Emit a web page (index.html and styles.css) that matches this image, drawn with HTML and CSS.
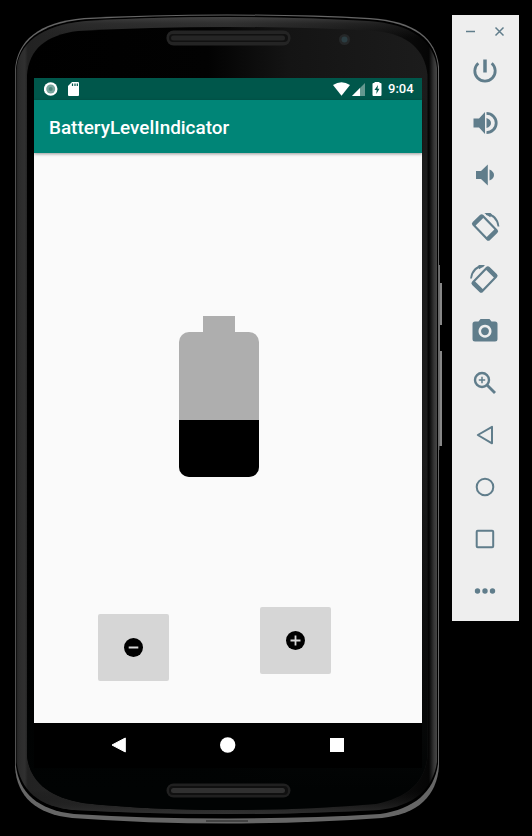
FILE: index.html
```html
<!DOCTYPE html>
<html lang="en">
<head>
<meta charset="utf-8">
<title>BatteryLevelIndicator</title>
<link rel="stylesheet" href="styles.css">
</head>
<body>
<div class="desktop">
  <div class="phone">
    <svg class="frame" width="452" height="836" viewBox="0 0 452 836" aria-hidden="true">
      <defs>
        <linearGradient id="side" x1="15" x2="440" y1="0" y2="0" gradientUnits="userSpaceOnUse">
          <stop offset="0" stop-color="#1c1c1c"/><stop offset=".009" stop-color="#2b2b2b"/>
          <stop offset=".023" stop-color="#303030"/><stop offset=".03" stop-color="#222"/>
          <stop offset=".5" stop-color="#303030"/><stop offset=".974" stop-color="#050505"/>
          <stop offset=".986" stop-color="#363636"/><stop offset="1" stop-color="#555"/>
        </linearGradient>
        <linearGradient id="topEdge" x1="0" x2="0" y1="14" y2="823" gradientUnits="userSpaceOnUse">
          <stop offset="0" stop-color="#555" stop-opacity=".9"/><stop offset=".012" stop-color="#303030" stop-opacity=".5"/>
          <stop offset=".03" stop-color="#222" stop-opacity="0"/><stop offset=".96" stop-color="#111" stop-opacity="0"/>
          <stop offset=".978" stop-color="#222" stop-opacity=".6"/><stop offset="1" stop-color="#444"/>
        </linearGradient>
        <linearGradient id="glass" x1="27" x2="428" y1="0" y2="0" gradientUnits="userSpaceOnUse">
          <stop offset="0" stop-color="#000"/><stop offset=".45" stop-color="#020202"/>
          <stop offset=".65" stop-color="#141414"/><stop offset="1" stop-color="#1c1c1c"/>
        </linearGradient>
        <linearGradient id="fade" x1="0" x2="0" y1="460" y2="790" gradientUnits="userSpaceOnUse">
          <stop offset="0" stop-color="#000" stop-opacity="0"/><stop offset="1" stop-color="#010303"/>
        </linearGradient>
      </defs>
      <path d="M438 265h2v18h2v42h-2v26h2v95h-4z" fill="#888"/>
      <path d="M439 265v185" stroke="#555"/>
      <path d="M15 70C17 41 38 22 84 18Q150 14.500 227 14.500T370 18C415 21 436 38 439 67V766C437 796 418 814 382 818Q306 823.500 227 823.500T72 818C36 814 17 797 15 767Z" fill="#666"/>
      <path d="M15.800 70C17.800 42.500 39 23.500 85 19.300Q150 15.500 227 15.500T369 19.300C414 22.500 436 39.500 438 68V764C434 792 414 809 380 814Q306 818.500 227 818.500T74 814C38 810 19 793 15.800 765Z" fill="#000"/>
      <path d="M16.500 70C18.500 44 40 25 86 21Q150 17 227 17T368 21C412 24 434 41 437 68V762C433 789 414 806 379 810Q306 814 227 814T74 810C39 807 20 790 16.500 762Z" fill="url(#side)"/>
      <path d="M16.500 70C18.500 44 40 25 86 21Q150 17 227 17T368 21C412 24 434 41 437 68V762C433 789 414 806 379 810Q306 814 227 814T74 810C39 807 20 790 16.500 762Z" fill="url(#topEdge)"/>
      <path d="M27 75C29 49 46 35 78 31Q150 27 227 27T376 31C408 34 425 50 427.500 75V756C425 782 409 797 376 804Q306 810 227 810T83 803C49 797 30 782 27 756Z" fill="url(#glass)"/>
      <path d="M27 460H427.500V756C425 782 409 797 376 804Q306 810 227 810T83 803C49 797 30 782 27 756Z" fill="url(#fade)"/>
      <rect x="166.500" y="30.500" width="124" height="15" rx="7" fill="#242424"/>
      <rect x="169" y="34" width="119" height="8" rx="4" fill="#111"/>
      <rect x="171" y="35.500" width="114" height="5" rx="2.500" fill="#252525"/>
      <rect x="166.500" y="783.500" width="124" height="14" rx="7" fill="#202020"/>
      <rect x="169" y="786" width="119" height="9" rx="4" fill="#101010"/>
      <rect x="171" y="788" width="114" height="5" rx="2.500" fill="#303030"/>
      <circle cx="344.500" cy="39.500" r="5.500" fill="#252728"/><circle cx="344.500" cy="39.500" r="3" fill="#2b3d42"/>
      <path d="M206 821H248" stroke="#222"/>
    </svg>
    <main class="screen">
      <header class="status">
        <svg class="record" width="14" height="14" viewBox="0 0 14 14"><circle cx="6.700" cy="7" r="6.800" fill="#fff"/><circle cx="6.700" cy="7" r="4.500" fill="#78a59d"/><circle cx="6.700" cy="7" r="2" fill="#4b857a"/></svg>
        <svg width="11" height="14" viewBox="0 0 11 14"><path d="M4 0h6q1 0 1 1v12q0 1-1 1H1q-1 0-1-1V4z" fill="#fff"/><path d="M4.500 1.500V4M7 1.500V4M9.300 1.500V4" stroke="#00574b" stroke-width="1.200"/></svg>
        <span class="space"></span>
        <svg class="signals" width="52" height="22" viewBox="0 0 52 22"><path d="M0 7Q8.500 1.500 17 7L8.500 17.800z" fill="#fff"/><path d="M32 5v13H19z" fill="#65988f"/><path d="M27 10v8h-8z" fill="#fff"/><g transform="translate(-1.500 0)"><path d="M43 5V4h5v1h1q1 0 1 1v11q0 1-1 1h-7q-1 0-1-1V6q0-1 1-1z" fill="#fff"/><path d="M46.500 7L43 12h2.200l-.4 4L48 10.800h-2z" fill="#00574b"/></g></svg>
        <time class="clock">9:04</time>
      </header>
      <div class="appbar"><h1>BatteryLevelIndicator</h1></div>
      <div class="content">
        <div class="battery"><div class="cap"></div><div class="cell"><div class="level"></div></div></div>
        <div class="controls">
          <button class="step minus" aria-label="Decrease"><svg width="19" height="19" viewBox="0 0 19 19"><circle cx="9.500" cy="9.500" r="9.500"/><path d="M4.700 9.500h9.600" stroke="#d6d6d6" stroke-width="2"/></svg></button>
          <button class="step" aria-label="Increase"><svg width="19" height="19" viewBox="0 0 19 19"><circle cx="9.500" cy="9.500" r="9.500"/><path d="M4.500 9.500h10M9.500 4.500v10" stroke="#d6d6d6" stroke-width="1.800"/></svg></button>
        </div>
      </div>
      <nav class="navbar">
        <svg width="16" height="16" viewBox="0 0 16 16"><path d="M14.300 1v14L1 8z" fill="#fff" stroke="#fff" stroke-linejoin="round"/></svg>
        <svg width="16" height="16" viewBox="0 0 16 16"><circle cx="7.700" cy="8" r="7.700" fill="#fff"/></svg>
        <svg width="16" height="16" viewBox="0 0 16 16"><path d="M1 1h14v14H1z" fill="#fff"/></svg>
      </nav>
    </main>
  </div>
  <aside class="toolbar">
    <div class="window">
      <svg width="12" height="12" viewBox="0 0 12 12"><path d="M1 6.500h9" class="line thin"/></svg>
      <svg width="12" height="12" viewBox="0 0 12 12"><path d="M1.500 2.500l8 8M9.500 2.500l-8 8" class="line thin"/></svg>
    </div>
    <svg class="tool" viewBox="0 0 32 32"><path d="M9.300 8.300A10.200 10.200 0 1 0 22.700 8.300" class="line thick"/><path d="M16 4.500v13" class="line power"/></svg>
    <svg class="tool" viewBox="0 0 32 32"><path d="M4.500 11.500h5.500l6-6.500v22l-6-6.500H4.500zM17.500 11q4.500 1.500 4.500 5t-4.500 5z" class="fill"/><path d="M17.500 6.300a9.700 9.700 0 0 1 0 19.400" class="line thick"/></svg>
    <svg class="tool" viewBox="0 0 32 32"><path d="M7 12h5l6.800-6.500v21L12 20H7zM20.500 10.500q4.500 2 4.500 5.500t-4.500 5.500z" class="fill"/></svg>
    <svg class="tool" viewBox="0 0 32 32"><g transform="rotate(46 16 16.500)"><path fill-rule="evenodd" d="M6 9h20q2.500 0 2.500 2.500v10q0 2.500-2.500 2.500H6q-2.500 0-2.500-2.500v-10Q3.500 9 6 9zM8 11.200v10.600h16V11.200z" class="fill"/></g><path d="M17 3Q28 4 29.500 15.500" class="line arc"/><path d="M15.300 2l6.200.1 1.500 1.400-1.800 2.800z" class="fill"/></svg>
    <svg class="tool" viewBox="0 0 32 32"><g transform="matrix(-1 0 0 1 31.500 0)"><g transform="rotate(46 16 16.500)"><path fill-rule="evenodd" d="M6 9h20q2.500 0 2.500 2.500v10q0 2.500-2.500 2.500H6q-2.500 0-2.500-2.500v-10Q3.500 9 6 9zM8 11.200v10.600h16V11.200z" class="fill"/></g><path d="M17 3Q28 4 29.500 15.500" class="line arc"/><path d="M15.300 2l6.200.1 1.500 1.400-1.800 2.800z" class="fill"/></g></svg>
    <svg class="tool" viewBox="0 0 32 32"><path fill-rule="evenodd" d="M11.500 4h9l2 2.500h3.500q2.500 0 2.500 2.500v15q0 2.500-2.500 2.500H6q-2.500 0-2.500-2.500V9q0-2.500 2.500-2.500h3.500zM16 9.700a6.500 6.500 0 1 0 .01 0zM16 12.200a4 4 0 1 1-.01 0z" class="fill"/></svg>
    <svg class="tool" viewBox="0 0 32 32"><circle cx="13" cy="13" r="7" class="line zoomring"/><path d="M18 18l8 8" class="line thick"/><path d="M9.800 13h6.400M13 9.800v6.400" class="line thin"/></svg>
    <svg class="tool" viewBox="0 0 32 32"><path d="M23 7.800v16.500L8.800 16z" class="line"/></svg>
    <svg class="tool" viewBox="0 0 32 32"><circle cx="16" cy="16" r="8.300" class="line"/></svg>
    <svg class="tool" viewBox="0 0 32 32"><rect x="7.700" y="7.700" width="16.500" height="16.500" rx="1" class="line"/></svg>
    <svg class="tool" viewBox="0 0 32 32"><g class="fill"><circle cx="8.500" cy="16" r="2.700"/><circle cx="16" cy="16" r="2.700"/><circle cx="23.500" cy="16" r="2.700"/></g></svg>
  </aside>
</div>
</body>
</html>
```
FILE: styles.css
```css
* { box-sizing: border-box; }
body { margin: 0; background: #000; font-family: Roboto, sans-serif; }
svg { display: block; flex: none; }
.desktop { display: flex; align-items: flex-start; width: 532px; height: 836px; overflow: hidden; background: #000; }
.phone { position: relative; width: 452px; height: 836px; padding: 78px 30px 0 34px; }
.frame { position: absolute; left: 0; top: 0; }
.screen { position: relative; display: flex; flex-direction: column; width: 388px; height: 690px; background: #fafafa; }
.status { display: flex; align-items: center; height: 22px; padding: 0 8px 0 10px; background: #00574b; color: #fff; }
.record { margin-right: 10px; }
.space { flex: 1; }
.signals { margin-right: 3px; }
.clock { width: 26px; font-size: 13px; font-weight: 500; line-height: 22px; white-space: nowrap; }
.appbar { display: flex; align-items: center; height: 53px; padding: 2px 15px 0; background: #008577; color: #fff; box-shadow: 0 1px 3px rgba(0, 0, 0, .4); }
.appbar h1 { margin: 0; font-size: 18.900px; font-weight: 500; line-height: 24px; }
.content { display: flex; flex: 1; flex-direction: column; padding: 163px 0 0; }
.battery { display: flex; flex-direction: column; align-items: center; width: 80px; margin-left: 145px; }
.cap { width: 32px; height: 16px; background: #aeaeae; }
.cell { display: flex; align-items: flex-end; width: 80px; height: 145px; overflow: hidden; border-radius: 10px; background: #aeaeae; }
.level { width: 100%; height: 57px; background: #000; }
.controls { display: flex; align-items: flex-start; gap: 91px; margin: 130px 0 0 64px; }
.step { display: flex; align-items: center; justify-content: center; width: 71px; height: 67px; padding: 0; border: 0; border-radius: 2px; background: #d6d6d6; color: #000; }
.minus { margin-top: 7px; }
.navbar { display: flex; justify-content: space-between; height: 45px; padding: 14px 77px 0; background: #000; }
.toolbar { display: flex; flex-direction: column; align-items: center; width: 67px; height: 606px; padding-right: 1px; margin-top: 15px; background: #eee; }
.window { display: flex; gap: 17px; margin: 10px 0 18px; }
.tool { width: 32px; height: 32px; margin-bottom: 20px; }
.fill { fill: #607d8b; }
.line { fill: none; stroke: #607d8b; stroke-width: 2; stroke-linejoin: round; }
.thin { stroke-width: 1.500; }
.thick { stroke-width: 2.800; }
.power { stroke-width: 3.500; }
.arc { stroke-width: 1.800; }
.zoomring { stroke-width: 2.400; }
```
